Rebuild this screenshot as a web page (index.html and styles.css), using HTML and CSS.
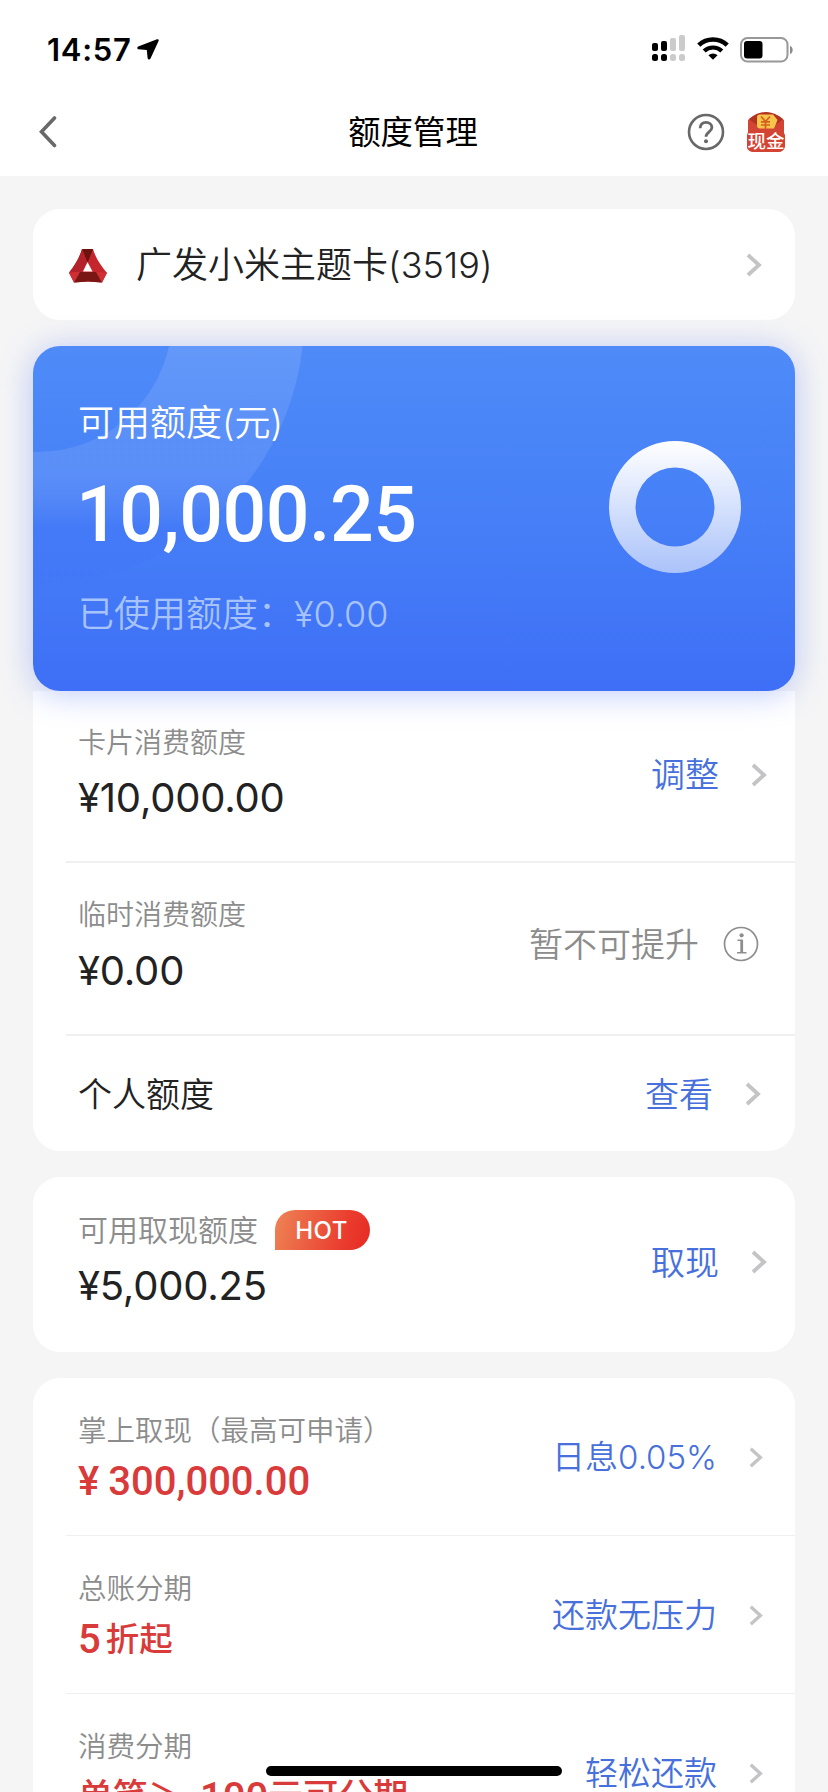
FILE: index.html
```html
<!DOCTYPE html>
<html lang="zh-CN">
<head>
<meta charset="utf-8">
<title>额度管理</title>
<link rel="stylesheet" href="styles.css">
</head>
<body>
<svg class="defs" width="0" height="0">
  <symbol id="chev" viewBox="0 0 16 24"><path d="M2 2 L13 12 L2 22" fill="none" stroke="#c4c4c6" stroke-width="3.800"/></symbol>
</svg>
<div class="screen">
  <header class="top">
    <div class="status">
      <span class="time">14:57</span>
      <svg class="loc" width="22" height="21" viewBox="0 0 22 21"><path d="M20 .3 1.200 7.500C-.1 8.100 0 10 1.500 10.200L9.800 10.900 10.600 19C10.900 20.800 12.700 21 13.500 19.500L21.600 2C22 .8 21.200-.1 20 .3Z"/></svg>
      <svg class="signal" width="34" height="28" viewBox="0 0 34 28">
        <g fill="#000"><rect x="0" y="8" width="6" height="8" rx="2"/><rect x="9" y="6" width="6" height="10" rx="2"/><rect x="0" y="19" width="6" height="7" rx="2.500"/><rect x="9" y="19" width="6" height="7" rx="2.500"/></g>
        <g fill="#cbcbcb"><rect x="18" y="3" width="6" height="13" rx="2"/><rect x="27" y="0" width="6" height="16" rx="2"/><rect x="18" y="19" width="6" height="7" rx="2.500"/><rect x="27" y="19" width="6" height="7" rx="2.500"/></g>
      </svg>
      <svg class="wifi" width="32" height="24" viewBox="0 0 32 24">
        <path d="M1.800 9.200A20.500 20.500 0 0 1 30.200 9.200" fill="none" stroke="#000" stroke-width="4.600"/>
        <path d="M7.200 15.100A12.600 12.600 0 0 1 24.800 15.100" fill="none" stroke="#000" stroke-width="4.200"/>
        <path d="M11.400 19.300A6.800 6.800 0 0 1 20.600 19.300L16 23.800Z"/>
      </svg>
      <svg class="battery" width="54" height="26" viewBox="0 0 54 26">
        <rect x="1" y="1" width="46.500" height="23.500" rx="6.500" fill="none" stroke="#989898" stroke-width="2"/>
        <rect x="4" y="4" width="18.500" height="17.500" rx="3"/>
        <path d="M50 9C53.600 10 53.600 16 50 17Z" fill="#8c8c8c"/>
      </svg>
    </div>
    <nav class="nav">
      <svg class="back" width="18" height="32" viewBox="0 0 18 32"><path d="M15.500 2 2.500 15.800 15.500 29.500" fill="none" stroke="#696969" stroke-width="3.600" stroke-linecap="round"/></svg>
      <h1 class="title">额度管理</h1>
      <svg class="help" width="38" height="38" viewBox="0 0 38 38">
        <circle cx="19" cy="19" r="17" fill="none" stroke="#686868" stroke-width="2.600"/>
        <path d="M13.200 15.200C13.200 11.300 15.700 9.300 19 9.300S24.900 11.400 24.900 14.600C24.900 18.900 19 18.900 19 23.700" fill="none" stroke="#686868" stroke-width="2.800"/>
        <circle cx="19" cy="28.300" r="2"/>
      </svg>
      <svg class="cash" width="40" height="42" viewBox="0 0 40 42">
        <path d="M2 9Q20-6 38 9V22L39 24V36Q37 41 33 41H7Q3 41 1 37V24L2 22Z" fill="#d24433"/>
        <path d="M3 8Q20-6 37 8Q20 24 3 8Z" fill="#b23324"/>
        <path d="M14 3.500H27L31.500 9 28 17.500H14Q11 17.500 11 14.500V6.500Q11 3.500 14 3.500Z" fill="#f8c54c"/>
        <path d="M15 5.500 19.500 10.500 24 5.500M15 10.800H24M15 14H24M19.500 10.500V18" fill="none" stroke="#d4621f" stroke-width="1.700"/>
        <text class="cash-text" x="20" y="37">现金</text>
      </svg>
    </nav>
  </header>

  <main class="content">
    <section class="card picker">
      <svg class="logo" width="40" height="36" viewBox="0 0 40 36">
        <path d="M14 1H25Q28 12 39 25L34 34.500 20 33.500 6 34.500 1 25Q11 12 14 1Z" fill="#c5262b"/>
        <path d="M14 1H25L19.500 15Z" fill="#6c120f"/>
        <path d="M14 1Q11 12 1 24.500L14 23.500 19.500 14.500Z" fill="#b3222a"/>
        <path d="M11 24H29L34 34.500 20 33.500 6 34.500Z" fill="#7a1715"/>
        <path d="M1 24.500 12 24 6 34.500Z" fill="#d03034"/>
        <path d="M39 24.500 28 24 34 34.500Z" fill="#d03034"/>
        <path d="M19.500 14 24.500 23.500H15Z" fill="#fff"/>
      </svg>
      <span class="card-name">广发小米主题卡<span class="digits">(3519)</span></span>
      <svg class="chev" width="16" height="24"><use href="#chev"/></svg>
    </section>

    <section class="hero">
      <svg class="hero-arc" width="762" height="345" viewBox="0 0 762 345">
        <defs><linearGradient id="arc" gradientUnits="userSpaceOnUse" x1="0" y1="0" x2="0" y2="240"><stop offset="0" stop-color="#fff" stop-opacity=".12"/><stop offset=".4" stop-color="#fff" stop-opacity=".09"/><stop offset=".75" stop-color="#4070f6" stop-opacity=".28"/><stop offset="1" stop-color="#3f6ff6" stop-opacity=".15"/></linearGradient></defs>
        <circle cx="5" cy="-28" r="200" fill="none" stroke="url(#arc)" stroke-width="132"/>
      </svg>
      <div class="hero-text">
        <div class="hero-label">可用额度(元)</div>
        <div class="hero-amount">10,000.25</div>
        <div class="hero-used">已使用额度：<span class="used-num">¥0.00</span></div>
      </div>
      <svg class="donut" width="132" height="132" viewBox="0 0 132 132">
        <defs><linearGradient id="ring" x1="0" y1="0" x2="0" y2="1"><stop offset="0" stop-color="#fff"/><stop offset="1" stop-color="#abc3fa"/></linearGradient></defs>
        <path fill="url(#ring)" fill-rule="evenodd" d="M66 0A66 66 0 1 1 66 132A66 66 0 1 1 66 0ZM66 26.500A39.500 39.500 0 1 0 66 105.500A39.500 39.500 0 1 0 66 26.500Z"/>
      </svg>
    </section>

    <section class="card limits">
      <div class="row row-a">
        <div class="info"><div class="label">卡片消费额度</div><div class="amount">¥10,000.00</div></div>
        <a class="action">调整<svg class="chev" width="16" height="24"><use href="#chev"/></svg></a>
      </div>
      <div class="row row-b">
        <div class="info"><div class="label">临时消费额度</div><div class="amount">¥0.00</div></div>
        <span class="action muted">暂不可提升<svg class="tip" width="36" height="36" viewBox="0 0 36 36">
          <circle cx="18" cy="18" r="16.500" fill="none" stroke="#8e8e8e" stroke-width="1.700"/>
          <circle cx="18.600" cy="9.300" r="2.100" fill="#8e8e8e"/>
          <path d="M14.500 14.300H19V26.500M14 26.700H23.500" fill="none" stroke="#8e8e8e" stroke-width="1.600"/>
          <path d="M18.700 14V27" stroke="#8e8e8e" stroke-width="2.800"/>
        </svg></span>
      </div>
      <div class="row row-c">
        <div class="personal">个人额度</div>
        <a class="action look">查看<svg class="chev" width="16" height="24"><use href="#chev"/></svg></a>
      </div>
    </section>

    <section class="card cash-card">
      <div class="row row-d">
        <div class="info">
          <div class="label wide">可用取现额度<span class="hot">HOT</span></div>
          <div class="amount">¥5,000.25</div>
        </div>
        <a class="action">取现<svg class="chev" width="16" height="24"><use href="#chev"/></svg></a>
      </div>
    </section>

    <section class="card offers">
      <div class="row offer">
        <div class="info"><div class="label">掌上取现（最高可申请）</div><div class="promo"><span class="yen">¥</span>300,000.00</div></div>
        <a class="action">日息<span class="rate">0.05%</span><svg class="chev thin" width="14" height="21"><use href="#chev"/></svg></a>
      </div>
      <div class="row offer">
        <div class="info"><div class="label">总账分期</div><div class="promo"><span class="five">5</span><span class="cn">折起</span></div></div>
        <a class="action">还款无压力<svg class="chev thin" width="14" height="21"><use href="#chev"/></svg></a>
      </div>
      <div class="row offer">
        <div class="info"><div class="label">消费分期</div><div class="promo last"><span>单笔＞</span><span class="hundred">100</span><span>元可分期</span></div></div>
        <a class="action">轻松还款<svg class="chev thin" width="14" height="21"><use href="#chev"/></svg></a>
      </div>
    </section>
  </main>
  <div class="home-bar"></div>
</div>
</body>
</html>
```
FILE: styles.css
```css
* { box-sizing: border-box; }
html, body { margin: 0; height: 1792px; overflow: hidden; }
body {
  background: #f5f5f6;
  color: #222;
  font-family: Inter, "Noto Sans CJK SC", sans-serif;
  font-weight: 350;
}
svg { display: block; flex: none; }
.defs { position: absolute; }
.screen { position: relative; width: 828px; height: 1792px; overflow: hidden; }

/* status bar and navigation */
.top { height: 176px; background: #fff; }
.status { display: flex; height: 88px; padding: 35px 34px 0 47px; }
.time { width: 86px; font-size: 31px; line-height: 30px; font-weight: 600; color: #000; letter-spacing: .7px; white-space: nowrap; }
.loc { margin: 4px 0 0 5px; }
.signal { margin-left: 493px; }
.wifi { margin: 1px 0 0 11px; }
.battery { margin: 2px 0 0 11px; }
.nav { display: flex; align-items: center; height: 87px; padding: 0 42px 0 39px; }
.title { flex: 1; margin: 3px 0 0; padding-left: 82px; text-align: center; font-size: 32.4px; line-height: 44px; font-weight: 400; color: #000; }
.help { margin-right: 21px; }
.help circle:last-child { fill: #686868; }
.cash-text { font: 500 18.500px "Noto Sans CJK SC", sans-serif; text-anchor: middle; fill: #fff; stroke: #d9412f; stroke-width: 1.200px; paint-order: stroke; }

/* cards */
.content { padding: 33px 33px 0; }
.card { background: #fff; border-radius: 27px; }
.picker { display: flex; align-items: center; height: 111px; padding: 0 33px 0 35px; }
.logo { margin-top: 3px; }
.card-name { flex: 1; margin-left: 28px; font-size: 36px; line-height: 50px; }
.digits { letter-spacing: .1px; }

.hero {
  position: relative;
  display: flex;
  justify-content: space-between;
  height: 345px;
  margin-top: 26px;
  padding: 52px 54px 0 45px;
  border-radius: 27px;
  background: linear-gradient(#4e8bf8, #467ff7 50%, #3e6ff6);
  box-shadow: 0 3px 32px rgba(75, 112, 240, .36);
  color: #fff;
}
.hero-arc { position: absolute; left: 0; top: 0; border-radius: 27px; }
.hero-text { position: relative; }
.hero-label { font-size: 36px; line-height: 50px; }
.hero-amount { margin-top: 22px; margin-left: -2px; font: 500 77px/90px Roboto, sans-serif; letter-spacing: -.5px; }
.hero-used { margin-top: 27px; font-size: 36px; line-height: 54px; color: #a7c3fb; white-space: nowrap; }
.donut { position: relative; margin-top: 43px; }

.row { display: flex; justify-content: space-between; padding-left: 45px; }
.row + .row { background: linear-gradient(#f0f0f1, #f0f0f1) 33px 0 / 100% 2px no-repeat; }
.label { font-size: 28px; line-height: 40px; color: #8c8c8c; white-space: nowrap; }
.amount { font-size: 40px; line-height: 50px; font-weight: 400; letter-spacing: -.2px; }
.action { display: flex; align-items: center; align-self: flex-start; height: 50px; font-size: 34px; line-height: 50px; color: #4770dc; white-space: nowrap; }
.action .chev { margin-left: 32px; }

.limits { height: 460px; border-radius: 0 0 27px 27px; }
.row-a { height: 170px; padding-top: 32px; padding-right: 28px; }
.row-a .amount { margin-top: 10px; }
.row-a .action { margin-top: 27px; }
.row-b { height: 173px; padding-top: 34px; padding-right: 36px; }
.row-b .amount { margin-top: 11px; }
.row-b .action { height: 52px; margin-top: 24px; line-height: 54px; color: #8c8c8c; }
.tip { margin-left: 24px; margin-top: -2px; }
.row-c { height: 117px; padding-top: 36px; padding-right: 34px; }
.row-c .chev { margin-top: -2px; }
.personal { font-size: 34px; line-height: 50px; }

.cash-card { height: 175px; margin-top: 26px; }
.row-d { padding-top: 33px; padding-right: 28px; }
.row-d .action { margin-top: 28px; }
.row-d .chev { margin-top: -2px; }
.wide { display: flex; font-size: 30px; }
.row-d .amount { margin-top: 11px; }
.hot {
  width: 95px;
  height: 40px;
  margin-left: 17px;
  border-radius: 20px 20px 20px 0;
  background: linear-gradient(105deg, #ee8455, #ea3a2d 75%, #e52a23);
  color: #fff;
  font-size: 24px;
  line-height: 41px;
  font-weight: 500;
  letter-spacing: .5px;
  text-align: center;
  text-indent: -2px;
}

.offers { height: 480px; margin-top: 26px; }
.offer { height: 158px; padding-top: 34px; padding-right: 32px; }
.offer:first-child { height: 157px; padding-top: 33px; }
.offer + .offer { background-size: 100% 1px; }
.offer .label { font-size: 28.500px; }
.offer .action { margin-top: 21px; font-size: 33px; }
.promo { display: flex; height: 50px; margin-top: 6px; line-height: 50px; color: #d93a3a; font-family: Roboto, "Noto Sans CJK SC", sans-serif; font-size: 40px; font-weight: 500; white-space: nowrap; }
.yen { margin-right: 9px; }
.five { margin-right: 5px; }
.cn { font-size: 33.500px; }
.last { font-size: 35px; }
.hundred { margin-left: 17px; font-size: 40px; }

.home-bar { position: absolute; left: 266px; top: 1766px; width: 296px; height: 10px; border-radius: 5px; background: #000; }
```
